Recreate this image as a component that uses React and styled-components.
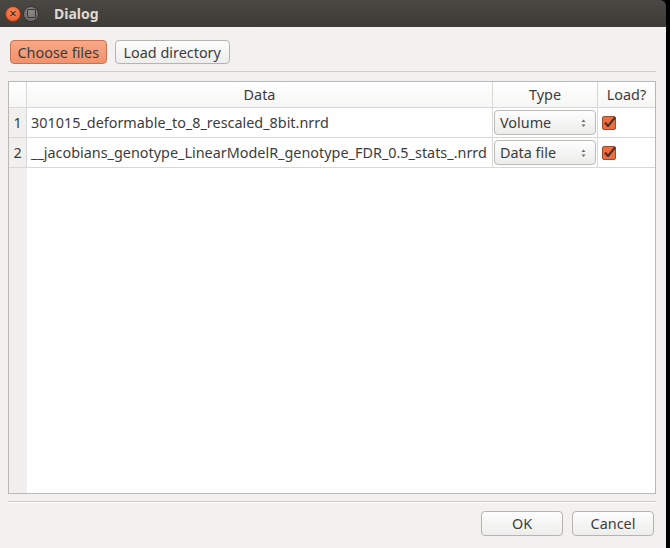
import React from "react";
import styled, { createGlobalStyle } from "styled-components";

const GlobalStyle = createGlobalStyle`
  html, body {
    margin: 0;
    padding: 0;
    background: #000;
  }
  body {
    font-family: "Noto Sans", "DejaVu Sans", sans-serif;
    font-size: 14.4px;
    color: #3c3c3c;
  }
`;

const rows = [
  { name: "301015_deformable_to_8_rescaled_8bit.nrrd", type: "Volume" },
  {
    name: "__jacobians_genotype_LinearModelR_genotype_FDR_0.5_stats_.nrrd",
    type: "Data file",
  },
];

const CheckMark = () => (
  <svg width="15" height="14" viewBox="0 0 15 14">
    <rect x="0.5" y="0.5" width="13" height="13" rx="1.5" fill="#ee6d40" stroke="#9c4a2c" />
    <path d="M3 6.5 L6 10 L13 1.5" fill="none" stroke="#4a3126" strokeWidth="2" strokeLinejoin="round" />
  </svg>
);

const Spinner = () => (
  <svg width="7" height="12" viewBox="0 0 7 12">
    <path d="M1.5 5 L3.5 2.5 L5.5 5 Z" fill="#6b6b6b" />
    <path d="M1.5 7.5 L3.5 10 L5.5 7.5 Z" fill="#6b6b6b" />
  </svg>
);

const App = () => {
  return (
    <>
      <GlobalStyle />
      <Window>
        <TitleBar>
          <WinButton $kind="close">×</WinButton>
          <WinButton $kind="min">
            <MinSquare />
          </WinButton>
          <Title>Dialog</Title>
        </TitleBar>
        <Body>
          <Toolbar>
            <Button $primary>Choose files</Button>
            <Button>Load directory</Button>
          </Toolbar>
          <Separator />
          <Table>
            <Corner />
            <HeadCell>Data</HeadCell>
            <HeadCell>Type</HeadCell>
            <HeadCell $last>Load?</HeadCell>
            {rows.map((r, i) => (
              <React.Fragment key={r.name}>
                <RowHead>{i + 1}</RowHead>
                <Cell>{r.name}</Cell>
                <Cell $center>
                  <Combo>
                    <span>{r.type}</span>
                    <Spinner />
                  </Combo>
                </Cell>
                <Cell $last>
                  <CheckMark />
                </Cell>
              </React.Fragment>
            ))}
            <RowHead $filler />
            <Filler />
          </Table>
          <Separator $footer />
          <Footer>
            <Button $wide>OK</Button>
            <Button $wide>Cancel</Button>
          </Footer>
        </Body>
      </Window>
    </>
  );
};

export default App;

const Window = styled.div`
  width: 666px;
  height: 548px;
  display: flex;
  flex-direction: column;
`;

const TitleBar = styled.div`
  height: 27px;
  display: flex;
  align-items: center;
  padding-left: 5px;
  gap: 2px;
  background: linear-gradient(#4a4843, #3c3b37);
  border-top-right-radius: 6px;
  box-sizing: border-box;
`;

const WinButton = styled.div`
  width: 16px;
  height: 16px;
  border-radius: 50%;
  display: flex;
  align-items: center;
  justify-content: center;
  font-size: 13px;
  line-height: 1;
  color: #3b1b10;
  background: ${(p) =>
    p.$kind === "close"
      ? "radial-gradient(circle at 50% 35%, #f68a5c, #e7552a)"
      : "radial-gradient(circle at 50% 35%, #8d8b87, #65635f)"};
  border: 1px solid ${(p) => (p.$kind === "close" ? "#8e3415" : "#33322f")};
  box-sizing: border-box;
`;

const MinSquare = styled.div`
  width: 7px;
  height: 7px;
  border: 1px solid #3a3936;
  border-radius: 1px;
`;

const Title = styled.div`
  margin-left: 13px;
  font-weight: bold;
  font-size: 14px;
  color: #dfdbd2;
`;

const Body = styled.div`
  flex: 1;
  display: flex;
  flex-direction: column;
  background: #f2f1f0;
  padding: 0 10px 12px 8px;
`;

const Toolbar = styled.div`
  display: flex;
  gap: 8px;
  padding: 13px 0 0 2px;
`;

const Button = styled.button`
  height: ${(p) => (p.$wide ? "25px" : "24px")};
  width: ${(p) => (p.$wide ? "82px" : "auto")};
  padding: 0 ${(p) => (p.$primary ? "6.5px" : "8px")};
  border-radius: 4px;
  font-family: inherit;
  font-size: 14.4px;
  color: #3c3c3c;
  border: 1px solid ${(p) => (p.$primary ? "#c77352" : "#b6b4af")};
  background: ${(p) =>
    p.$primary
      ? "linear-gradient(#f7a787, #f2926d)"
      : "linear-gradient(#fdfdfd, #ededec)"};
`;

const Separator = styled.div`
  height: 1px;
  background: #cfcdca;
  margin-top: 7px;
  box-shadow: ${(p) => (p.$footer ? "0 1px 0 #ffffff" : "none")};
`;

const Table = styled.div`
  margin-top: 9px;
  height: 413px;
  box-sizing: border-box;
  border: 1px solid #bab8b3;
  background: #fff;
  display: grid;
  grid-template-columns: 18px 466px 105px 1fr;
  grid-template-rows: 26px 30px 30px 1fr;
`;

const Corner = styled.div`
  background: linear-gradient(#ffffff, #f6f6f5);
  border-right: 1px solid #d9d8d6;
  border-bottom: 1px solid #d9d8d6;
`;

const HeadCell = styled.div`
  display: flex;
  align-items: center;
  justify-content: center;
  background: linear-gradient(#ffffff, #f6f6f5);
  border-right: ${(p) => (p.$last ? "none" : "1px solid #d9d8d6")};
  border-bottom: 1px solid #d9d8d6;
`;

const RowHead = styled.div`
  display: flex;
  align-items: center;
  justify-content: center;
  background: #f1f0ef;
  border-right: 1px solid ${(p) => (p.$filler ? "#f1f0ef" : "#d9d8d6")};
  border-bottom: ${(p) => (p.$filler ? "none" : "1px solid #d9d8d6")};
`;

const Cell = styled.div`
  display: flex;
  align-items: center;
  padding-left: ${(p) => (p.$center ? "1px" : "4px")};
  padding-right: ${(p) => (p.$center ? "1px" : "0")};
  white-space: nowrap;
  overflow: hidden;
  border-right: ${(p) => (p.$last ? "none" : "1px solid #d9d8d6")};
  border-bottom: 1px solid #d9d8d6;
`;

const Combo = styled.div`
  flex: 1;
  height: 25px;
  box-sizing: border-box;
  display: flex;
  align-items: center;
  justify-content: space-between;
  padding: 0 8px 0 5px;
  border: 1px solid #bcbab5;
  border-radius: 4px;
  background: linear-gradient(#fefefe, #ececeb);
`;

const Filler = styled.div`
  grid-column: 2 / 5;
`;

const Footer = styled.div`
  display: flex;
  justify-content: flex-end;
  gap: 9px;
  margin-top: 9px;
  padding-right: 2px;
`;
